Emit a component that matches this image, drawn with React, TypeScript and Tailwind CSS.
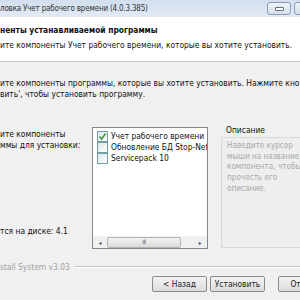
import React from "react";

const font = { fontFamily: '"DejaVu Sans Condensed", "DejaVu Sans", Tahoma, sans-serif', fontStretch: "condensed" as const };

function Check({ checked }: { checked?: boolean }) {
  return (
    <div className="w-[11px] h-[11px] shrink-0 border border-[#6f9ea4] bg-gradient-to-br from-[#dfe6e8] to-[#ffffff] flex items-center justify-center">
      {checked && (
        <svg width="9" height="9" viewBox="0 0 9 9">
          <path d="M1.5 4.5 L3.6 7 L7.6 1.6" fill="none" stroke="#3a9a3a" strokeWidth="1.6" />
        </svg>
      )}
    </div>
  );
}

function Btn({ children, w, extra = "" }: { children: React.ReactNode; w: string; extra?: string }) {
  return (
    <div
      className={`${w} ${extra} h-[16px] shrink-0 rounded-[2px] border border-[#8a8a8a] bg-gradient-to-b from-[#f4f4f4] to-[#dcdcdc] flex items-center justify-center text-[8.4px] text-[#222]`}
    >
      {children}
    </div>
  );
}

export default function App() {
  return (
    <div className="w-[300px] h-[300px] overflow-hidden bg-[#f0f0f0] flex flex-col text-[#111]" style={font}>
      {/* title bar */}
      <div className="h-[17px] shrink-0 bg-gradient-to-b from-[#d3dfee] to-[#e2eaf5] flex items-start">
        <div className="flex-1 pt-[3px] text-[8px] tracking-[-0.2px] leading-[11px] text-[#333] whitespace-nowrap">
          ловка Учет рабочего времени (4.0.3.385)
        </div>
        <div className="flex gap-[3px] mr-[-18px] pt-[2px] shrink-0">
          <div className="w-[24px] h-[13px] rounded-[3px] border border-[#8c9cb2] bg-gradient-to-b from-[#eef3f9] to-[#d4dfec] flex items-center justify-center">
            <div className="w-[9px] h-[4px] border border-[#5f6e82] bg-white rounded-[1px]" />
          </div>
          <div className="w-[24px] h-[13px] rounded-[3px] border border-[#8c9cb2] bg-gradient-to-b from-[#eef3f9] to-[#d4dfec]" />
        </div>
      </div>

      {/* header */}
      <div className="h-[45px] shrink-0 bg-white border-b border-[#c8c8c8] flex flex-col pt-[8px] gap-[5px]">
        <div className="text-[8.4px] leading-[10px] font-bold whitespace-nowrap">ненты устанавливаемой программы</div>
        <div className="text-[8.4px] leading-[10px] whitespace-nowrap">
          ите компоненты Учет рабочего времени, которые вы хотите установить.
        </div>
      </div>

      {/* body */}
      <div className="flex flex-col pt-[16px] text-[8.4px] leading-[10.5px]">
        <div className="whitespace-nowrap">ите компоненты программы, которые вы хотите установить. Нажмите кнопку</div>
        <div className="whitespace-nowrap">вить', чтобы установить программу.</div>
      </div>

      <div className="flex mt-[28px] h-[122px] shrink-0">
        <div className="w-[92px] shrink-0 flex flex-col text-[8.4px] leading-[11px] pt-[2px]">
          <div className="whitespace-nowrap">ите компоненты</div>
          <div className="whitespace-nowrap">ммы для установки:</div>
          <div className="mt-auto mb-[12px] whitespace-nowrap">тся на диске: 4.1</div>
        </div>

        {/* list box */}
        <div className="w-[116px] shrink-0 border border-[#828790] bg-white flex flex-col">
          <div className="flex-1 flex flex-col pt-[3px] pl-[4px] text-[8.4px] leading-[11px]">
            <div className="flex items-center gap-[3px] whitespace-nowrap overflow-hidden">
              <Check checked />
              <span>Учет рабочего времени</span>
            </div>
            <div className="flex items-center gap-[3px] whitespace-nowrap overflow-hidden">
              <Check />
              <span>Обновление БД Stop-Net</span>
            </div>
            <div className="flex items-center gap-[3px] whitespace-nowrap overflow-hidden">
              <Check />
              <span>Servicepack 10</span>
            </div>
          </div>
          {/* h scrollbar */}
          <div className="h-[12px] shrink-0 bg-[#f0f0f0] flex items-center">
            <div className="w-[14px] flex items-center justify-center text-[6px] text-[#444]">◂</div>
            <div className="w-[74px] h-[11px] rounded-[2px] border border-[#b4b4b4] bg-gradient-to-b from-[#f2f2f2] to-[#dadada] flex items-center justify-center">
              <span className="text-[6px] leading-[6px] tracking-[-0.5px] text-[#555]">III</span>
            </div>
            <div className="flex-1" />
            <div className="w-[14px] flex items-center justify-center text-[6px] text-[#444]">▸</div>
          </div>
        </div>

        <div className="w-[13px] shrink-0" />

        {/* description */}
        <div className="flex-1 flex flex-col">
          <div className="pl-[5px] text-[8.4px] leading-[10px] -mt-[2px]">Описание</div>
          <div className="flex-1 mt-[2px] mr-[-20px] mb-[1px] border-l border-t border-b border-[#d9d9d9] bg-[#eeeeee] pl-[5px] pt-[2px] text-[8.1px] leading-[10.7px] text-[#a8a8a8]">
            <div className="whitespace-nowrap">Наведите курсор</div>
            <div className="whitespace-nowrap">мыши на название</div>
            <div className="whitespace-nowrap">компонента, чтобы</div>
            <div className="whitespace-nowrap">прочесть его</div>
            <div className="whitespace-nowrap">описание.</div>
          </div>
        </div>
      </div>

      {/* separator */}
      <div className="flex items-center mt-[13px] h-[10px]">
        <span className="text-[8.4px] text-[#a0a0a0] whitespace-nowrap">stall System v3.03</span>
        <div className="flex-1 ml-[4px] flex flex-col">
          <div className="h-px bg-[#c6c6c6]" />
          <div className="h-px bg-white" />
        </div>
      </div>

      {/* buttons */}
      <div className="flex mt-[4px] pl-[152px]">
        <Btn w="w-[55px]">&lt; Назад</Btn>
        <Btn w="w-[55px]" extra="ml-[3px]">Установить</Btn>
        <Btn w="w-[55px]" extra="ml-[13px]">Отмена</Btn>
      </div>
    </div>
  );
}
